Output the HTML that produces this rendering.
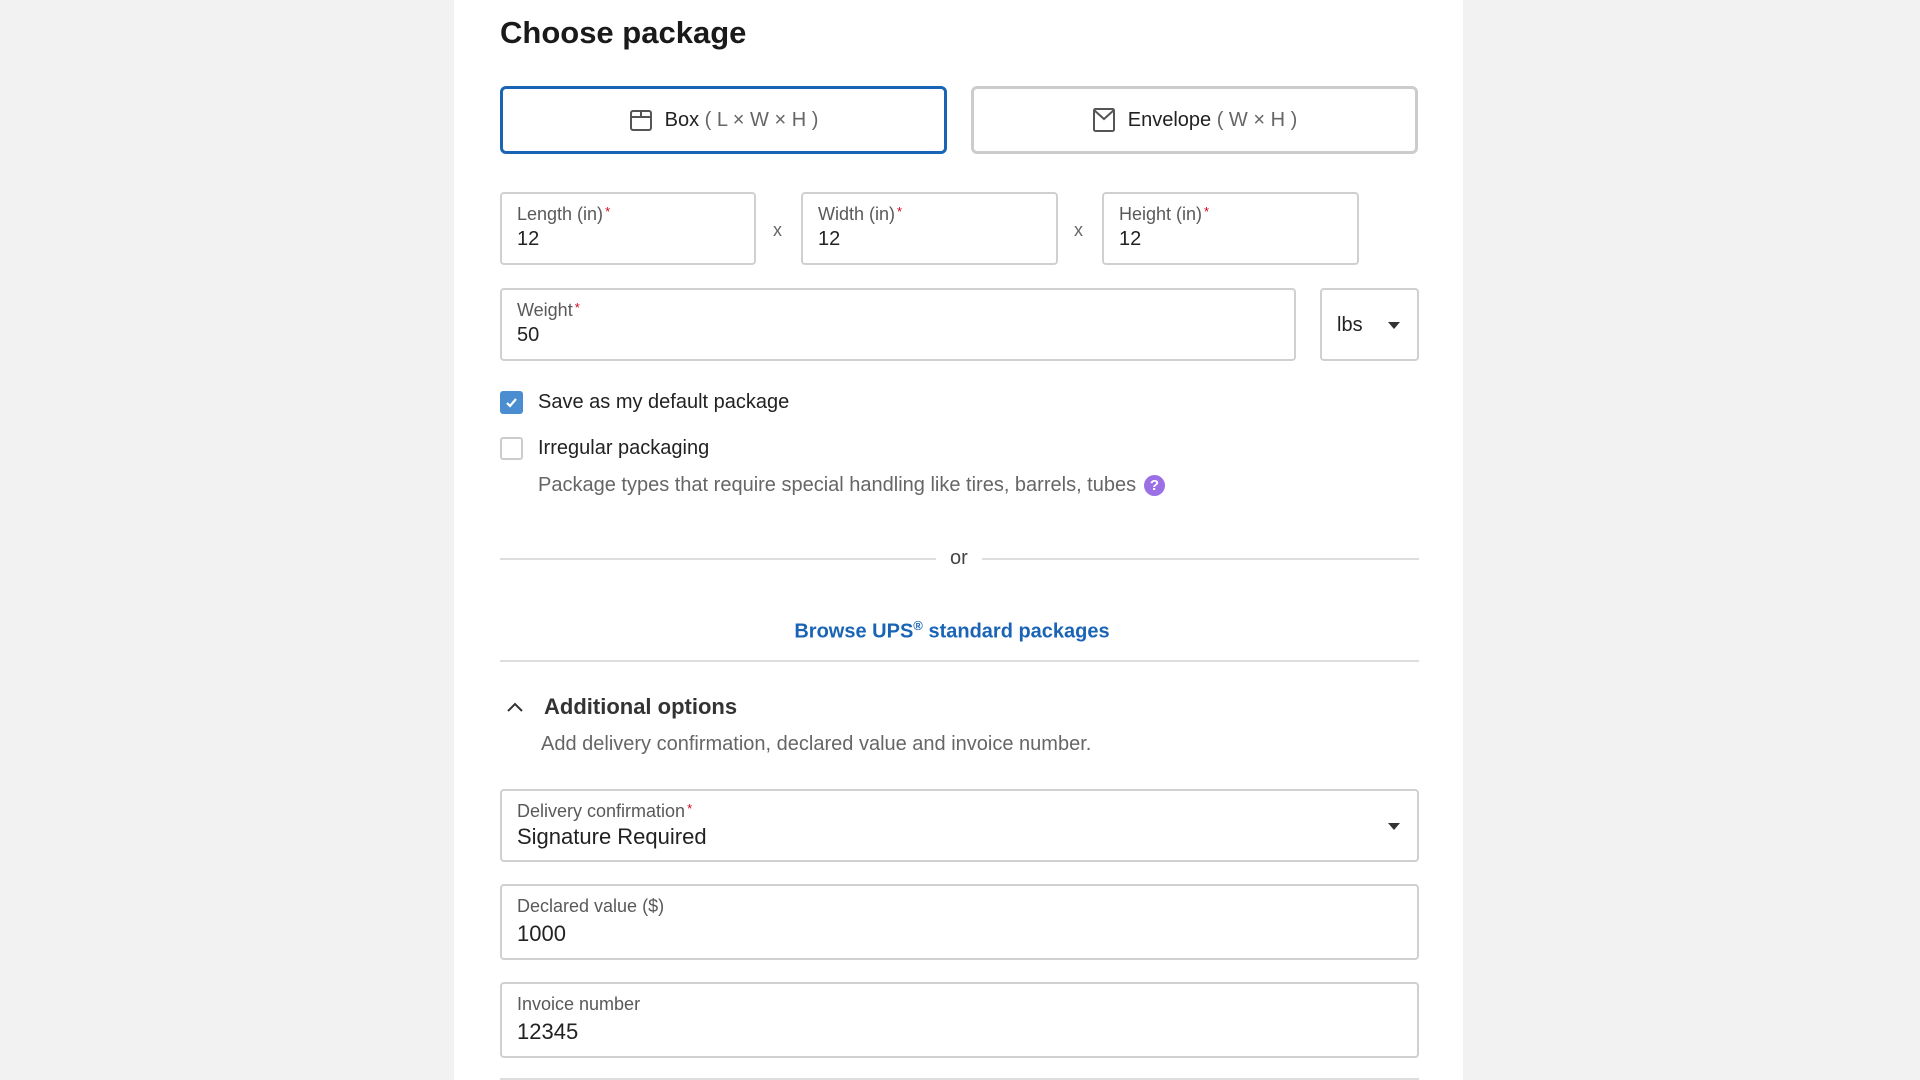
<!DOCTYPE html>
<html><head><meta charset="utf-8"><style>
*{box-sizing:border-box;margin:0;padding:0}
body{width:1920px;height:1080px;background:#f2f2f2;font-family:"Liberation Sans",Arial,sans-serif;position:relative;overflow:hidden;color:#222}
.panel{position:absolute;left:454px;top:0;width:1009px;height:1080px;background:#fff}
.a{position:absolute}
.inp{position:absolute;border:2px solid #d0d0d0;border-radius:4px;background:#fff}
.lbl{position:absolute;left:15px;top:10px;font-size:18px;color:#595959}
.lbl i{color:#d0021b;font-style:normal;font-size:13px;vertical-align:top;margin-left:2px}
.val{position:absolute;left:15px;top:34px;font-size:20px;color:#222}
.btn{position:absolute;top:86px;height:68px;border-radius:6px;display:flex;align-items:center;justify-content:center;font-size:20px;color:#222;gap:12px}
.btn span.g{color:#666}
.caret{position:absolute;width:0;height:0;border-left:6px solid transparent;border-right:6px solid transparent;border-top:7px solid #333}
</style></head><body>
<div class="panel"></div>
<div class="a" style="left:500px;top:15px;font-size:31px;font-weight:bold;color:#1a1a1a">Choose package</div>

<div class="btn" style="left:500px;width:447px;border:3px solid #1a64b5">
<svg width="24" height="24" viewBox="0 0 24 24" fill="none" stroke="#555" stroke-width="2"><rect x="2" y="3" width="20" height="19" rx="2"/><path d="M2 9h20M12 3v6"/></svg>
<span>Box <span class="g">( L × W × H )</span></span></div>
<div class="btn" style="left:971px;width:447px;border:3px solid #ccc">
<svg width="24" height="26" viewBox="0 0 24 26" fill="none" stroke="#555" stroke-width="2"><rect x="2" y="2" width="20" height="22" rx="1.5"/><path d="M2 3l10 9 10-9"/></svg>
<span>Envelope <span class="g">( W × H )</span></span></div>

<div class="inp" style="left:500px;top:192px;width:256px;height:73px"><div class="lbl">Length (in)<i>*</i></div><div class="val">12</div></div>
<div class="a" style="left:773px;top:220px;font-size:18px;color:#666">x</div>
<div class="inp" style="left:801px;top:192px;width:257px;height:73px"><div class="lbl">Width (in)<i>*</i></div><div class="val">12</div></div>
<div class="a" style="left:1074px;top:220px;font-size:18px;color:#666">x</div>
<div class="inp" style="left:1102px;top:192px;width:257px;height:73px"><div class="lbl">Height (in)<i>*</i></div><div class="val">12</div></div>

<div class="inp" style="left:500px;top:288px;width:796px;height:73px"><div class="lbl">Weight<i>*</i></div><div class="val">50</div></div>
<div class="inp" style="left:1320px;top:288px;width:99px;height:73px"><div class="a" style="left:15px;top:24px;font-size:20px">lbs</div><div class="caret" style="left:66px;top:32px"></div></div>

<div class="a" style="left:500px;top:391px;width:23px;height:23px;border-radius:3px;background:#4a8ed1">
<svg width="23" height="23" viewBox="0 0 23 23"><path d="M7 12l3 3 6-7" fill="none" stroke="#fff" stroke-width="2.2"/></svg></div>
<div class="a" style="left:538px;top:391px;font-size:20px">Save as my default package</div>
<div class="a" style="left:500px;top:437px;width:23px;height:23px;border-radius:3px;border:2px solid #ccc"></div>
<div class="a" style="left:538px;top:437px;font-size:20px">Irregular packaging</div>
<div class="a" style="left:538px;top:474px;font-size:20px;color:#666">Package types that require special handling like tires, barrels, tubes</div>
<div class="a" style="left:1144px;top:475px;width:21px;height:21px;border-radius:50%;background:#9b6fe6;color:#fff;font-size:15px;font-weight:bold;text-align:center;line-height:21px">?</div>

<div class="a" style="left:500px;top:558px;width:436px;height:2px;background:#ddd"></div>
<div class="a" style="left:982px;top:558px;width:437px;height:2px;background:#ddd"></div>
<div class="a" style="left:950px;top:547px;font-size:20px;color:#444">or</div>

<div class="a" style="left:0;top:618px;width:1904px;text-align:center;font-size:20px;font-weight:bold;color:#1a64b5">Browse UPS<sup style="font-size:13px">®</sup> standard packages</div>
<div class="a" style="left:500px;top:660px;width:919px;height:2px;background:#ddd"></div>

<svg class="a" style="left:506px;top:700px" width="18" height="14" viewBox="0 0 18 14"><path d="M2 11l7-7 7 7" fill="none" stroke="#333" stroke-width="2"/></svg>
<div class="a" style="left:544px;top:694px;font-size:22px;font-weight:bold;color:#333">Additional options</div>
<div class="a" style="left:541px;top:733px;font-size:20px;color:#666">Add delivery confirmation, declared value and invoice number.</div>

<div class="inp" style="left:500px;top:789px;width:919px;height:73px"><div class="lbl">Delivery confirmation<i>*</i></div><div class="val" style="top:33px;font-size:22px">Signature Required</div><div class="caret" style="left:886px;top:32px"></div></div>
<div class="inp" style="left:500px;top:884px;width:919px;height:76px"><div class="lbl">Declared value ($)</div><div class="val" style="top:35px;font-size:22px">1000</div></div>
<div class="inp" style="left:500px;top:982px;width:919px;height:76px"><div class="lbl">Invoice number</div><div class="val" style="top:35px;font-size:22px">12345</div></div>
<div class="a" style="left:500px;top:1078px;width:919px;height:2px;background:#ddd"></div>
</body></html>
